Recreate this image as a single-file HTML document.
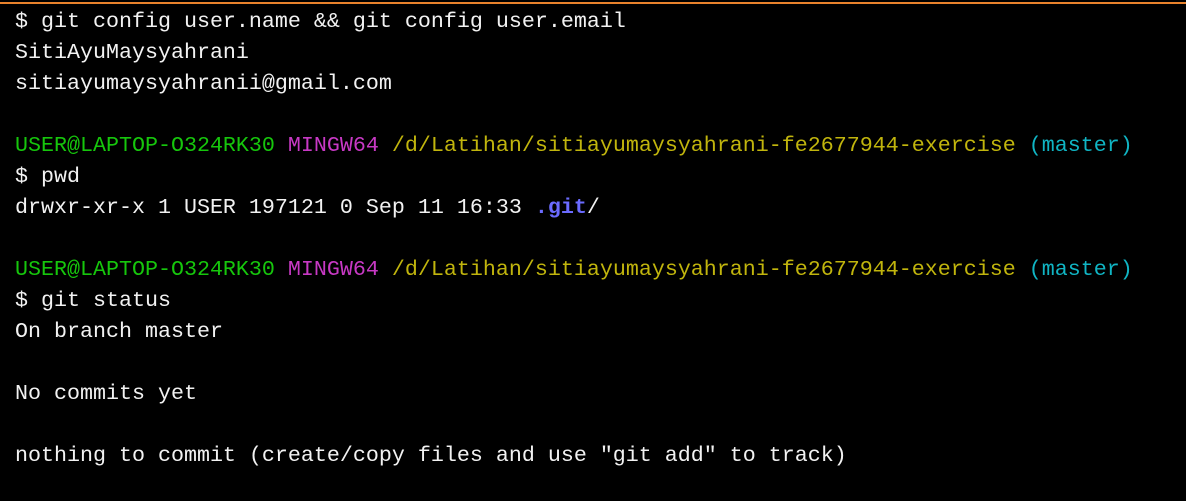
<html><head><style>
body{margin:0;background:#000;width:1186px;height:501px;overflow:hidden;position:relative}
.bar{position:absolute;top:2px;left:0;right:0;height:2px;background:#e8822c}
pre{position:absolute;left:15px;top:6px;margin:0;font-family:"Liberation Mono",monospace;font-size:21.67px;line-height:31px;color:#f2f2f2}
.g{color:#16c60c}.m{color:#c839c5}.y{color:#c1b50d}.c{color:#10b5c4}.b{color:#6b6bff;font-weight:bold}
</style></head><body><div class="bar"></div><pre>$ git config user.name &amp;&amp; git config user.email
SitiAyuMaysyahrani
sitiayumaysyahranii@gmail.com

<span class="g">USER@LAPTOP-O324RK30</span> <span class="m">MINGW64</span> <span class="y">/d/Latihan/sitiayumaysyahrani-fe2677944-exercise</span> <span class="c">(master)</span>
$ pwd
drwxr-xr-x 1 USER 197121 0 Sep 11 16:33 <span class="b">.git</span>/

<span class="g">USER@LAPTOP-O324RK30</span> <span class="m">MINGW64</span> <span class="y">/d/Latihan/sitiayumaysyahrani-fe2677944-exercise</span> <span class="c">(master)</span>
$ git status
On branch master

No commits yet

nothing to commit (create/copy files and use "git add" to track)</pre></body></html>
